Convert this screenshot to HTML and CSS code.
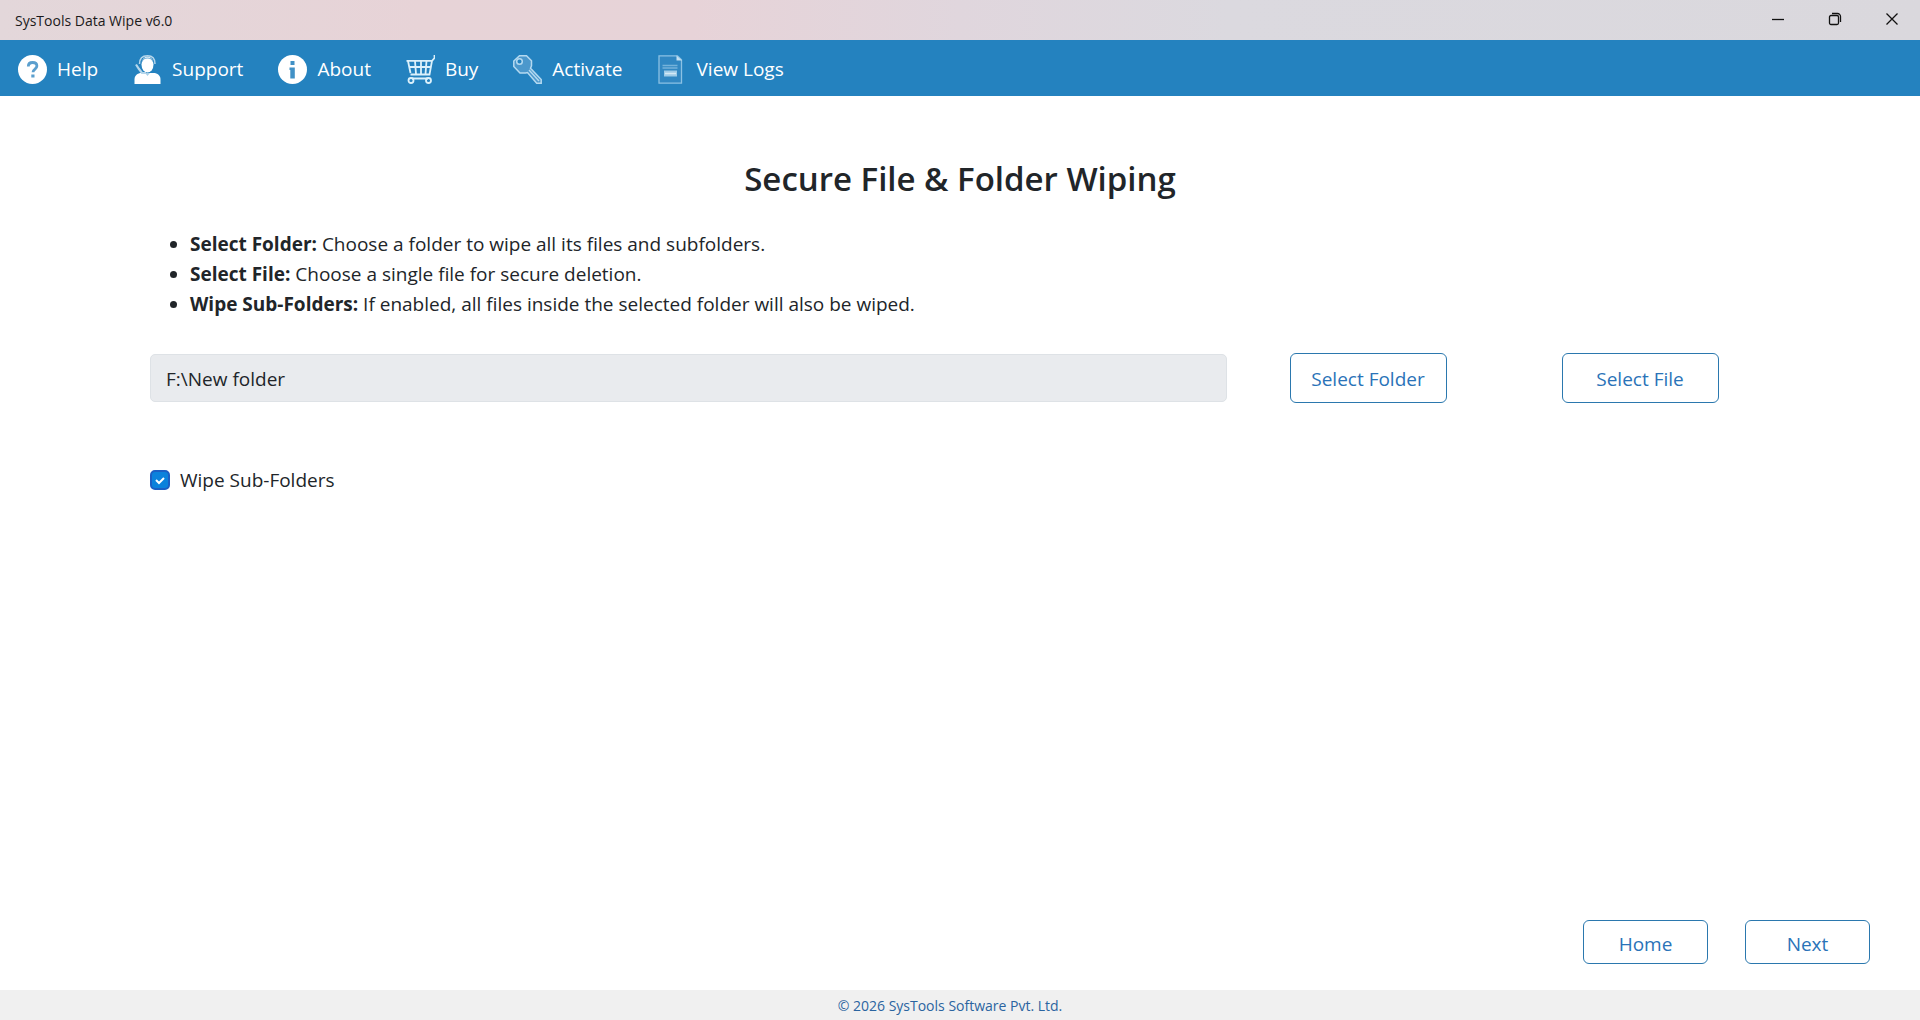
FILE: index.html
```html
<!DOCTYPE html>
<html lang="en">
<head>
  <meta charset="UTF-8">
  <meta name="viewport" content="width=device-width, initial-scale=1">
  <title>SysTools Data Wipe v6.0</title>
  <link rel="stylesheet" href="styles.css">
</head>
<body>
  <header class="title-bar">
    <span class="app-title">SysTools Data Wipe v6.0</span>
    <div class="window-controls">
      <button type="button" class="window-btn" aria-label="Minimize">
        <svg width="14" height="14" viewBox="0 0 14 14"><path d="M1 7.5h12"/></svg>
      </button>
      <button type="button" class="window-btn" aria-label="Restore">
        <svg width="14" height="14" viewBox="0 0 14 14"><rect x="1.5" y="3.5" width="9" height="9" rx="1.5"/><path d="M4 1.5h5.500a3 3 0 0 1 3 3V10"/></svg>
      </button>
      <button type="button" class="window-btn" aria-label="Close">
        <svg width="14" height="14" viewBox="0 0 14 14"><path d="M1.500 1.500l11 11M12.500 1.500l-11 11"/></svg>
      </button>
    </div>
  </header>

  <nav class="menu-bar">
    <a href="#help" class="menu-item">
      <svg class="menu-icon" viewBox="0 0 29 29">
        <circle cx="14.500" cy="14.500" r="14.500" fill="#fff"/>
        <path d="M10.300 11.500c0-2.600 1.800-4 4.300-4s4.300 1.400 4.300 3.600c0 3-3.900 2.900-3.900 6.200" fill="none" stroke="#5b9fce" stroke-width="2.800"/>
        <rect x="13.300" y="19.500" width="3.200" height="3" fill="#5b9fce"/>
      </svg>
      Help
    </a>
    <a href="#support" class="menu-item">
      <svg class="menu-icon" viewBox="0 0 29 29">
        <path d="M1.500 29v-4.500c0-4 3-6.500 7-6.500h12c4 0 7 2.500 7 6.500V29z" fill="#fff"/>
        <path d="M12 18l2.500 3 2.500-3z" fill="#a9d0e8"/>
        <ellipse cx="14.500" cy="9.500" rx="6" ry="8" fill="#fff"/>
        <path d="M6.500 9c0-6 3-8.200 8-8.200S22 3 22 9" fill="none" stroke="#b5d6eb" stroke-width="1.500"/>
        <path d="M9 6.500C10 3.500 12 3 14.500 3s4.500.5 5.500 3.500" fill="none" stroke="#6faed7" stroke-width="1.200"/>
        <path d="M3 9.500l3 4.500 3 4h4" fill="none" stroke="#b5d6eb" stroke-width="2.200"/>
      </svg>
      Support
    </a>
    <a href="#about" class="menu-item">
      <svg class="menu-icon" viewBox="0 0 29 29">
        <circle cx="14.500" cy="14.500" r="14.500" fill="#fff"/>
        <path d="M12.500 6h4v4h-4zM11.500 12.500h5.300V23.500h-4.500V15h-.8z" fill="#4191c6"/>
      </svg>
      About
    </a>
    <a href="#buy" class="menu-item">
      <svg class="menu-icon" viewBox="0 0 29 29" fill="none" stroke="#dcf1fb" stroke-width="1.800">
        <path d="M28.500 0v3L26 5.800 23.500 19.500H4.500M.5 5.800h25.500M2 6l2.500 12M3 12h22M9 6l1 13M15 6v13M20.500 6l-1 13M6 23.500h16"/>
        <circle cx="5" cy="25.500" r="2.500"/>
        <circle cx="22.500" cy="25.500" r="2.500"/>
      </svg>
      Buy
    </a>
    <a href="#activate" class="menu-item">
      <svg class="menu-icon" viewBox="0 0 29 29" fill="#4c98cc" stroke="#b4d9f0" stroke-width="1.500">
        <path d="M6.500.8h7l5 5v5l-1 2.500L28.200 24.500v3.700h-4.500L14.500 17.500l-2 .5H7L.8 11.500V6z"/>
        <path d="M16 15l10 11"/>
        <circle cx="6.500" cy="6.500" r="2.800" fill="#2482bf"/>
      </svg>
      Activate
    </a>
    <a href="#logs" class="menu-item">
      <svg class="menu-icon" viewBox="0 0 29 29">
        <path d="M1 .8h18.500l4 4v23.400H1z" fill="#3187c2" stroke="#8bc1e3" stroke-width="1.300"/>
        <path d="M18.500.5v5H24z" fill="#c4e0f2"/>
        <path d="M4.500 10.500h15M4.500 13h15" stroke="#75b2da" stroke-width="1.500"/>
        <path d="M6 15.500h13v6H6z" fill="#9fcbe7"/>
        <path d="M7 18.500h11" stroke="#d5e9f5" stroke-width="1.500"/>
      </svg>
      View Logs
    </a>
  </nav>

  <main class="content">
    <h1>Secure File &amp; Folder Wiping</h1>
    <ul class="instructions">
      <li><b>Select Folder:</b> Choose a folder to wipe all its files and subfolders.</li>
      <li><b>Select File:</b> Choose a single file for secure deletion.</li>
      <li><b>Wipe Sub-Folders:</b> If enabled, all files inside the selected folder will also be wiped.</li>
    </ul>

    <div class="path-row">
      <input type="text" class="path-input" value="F:\New folder" aria-label="Selected path" readonly>
      <div class="path-action"><button type="button" class="btn">Select Folder</button></div>
      <div class="path-action"><button type="button" class="btn">Select File</button></div>
    </div>

    <div class="option">
      <input type="checkbox" id="wipe-sub" checked>
      <label for="wipe-sub">Wipe Sub-Folders</label>
    </div>
  </main>

  <div class="page-actions">
    <button type="button" class="btn nav-btn">Home</button>
    <button type="button" class="btn nav-btn">Next</button>
  </div>

  <footer class="footer">© 2026 SysTools Software Pvt. Ltd.</footer>
</body>
</html>
```
FILE: styles.css
```css
* {
  box-sizing: border-box;
}
body {
  margin: 0;
  min-height: 100vh;
  display: flex;
  flex-direction: column;
  background: #fff;
  color: #212529;
  font-family: "Segoe UI", "Open Sans", "Noto Sans", sans-serif;
  font-size: 19px;
  line-height: 30px;
}
button, input {
  font: inherit;
}

/* Window title bar */
.title-bar {
  display: flex;
  justify-content: space-between;
  height: 40px;
  padding-left: 15px;
  background: linear-gradient(90deg, #e3d7da 0%, #e7d3d7 22%, #e7d3d8 36%, #e0d6dd 50%, #dbd9df 64%, #dad8dd 100%);
}
.app-title {
  color: #1b1a1b;
  font-size: 14px;
  line-height: 41px;
}
.window-controls {
  display: flex;
}
.window-btn {
  display: flex;
  align-items: center;
  justify-content: center;
  width: 57px;
  height: 38px;
  padding: 0;
  background: none;
  border: none;
}
.window-btn svg {
  fill: none;
  stroke: #111;
  stroke-width: 1.3;
}

/* Menu */
.menu-bar {
  display: flex;
  align-items: center;
  gap: 35px;
  height: 56px;
  padding: 2px 18px 0;
  background: #2482bf;
}
.menu-item {
  display: flex;
  align-items: center;
  gap: 10px;
  color: #fff;
  text-decoration: none;
}
.menu-icon {
  width: 29px;
  height: 29px;
}

/* Page content */
.content {
  flex: 1;
  width: 85%;
  margin: 0 auto;
  padding-top: 60px;
}
h1 {
  margin: 0 0 27px;
  font-size: 33px;
  font-weight: 600;
  line-height: 46px;
  text-align: center;
}
.instructions {
  margin: 0 0 34px;
  padding-left: 46px;
}
.path-row {
  display: grid;
  grid-template-columns: 4fr 1fr 1fr;
  align-items: center;
}
.path-input {
  height: 48px;
  margin: 0 5px 0 6px;
  padding: 2px 15px 0;
  background: #e9ebee;
  border: 1px solid #dee2e6;
  border-radius: 5px;
  color: #212529;
  outline: none;
}
.path-action {
  text-align: center;
}
.btn {
  width: 157px;
  height: 50px;
  padding: 2px 0 0;
  background: #fff;
  border: 1px solid #2b78ae;
  border-radius: 6px;
  color: #2a73b8;
  cursor: pointer;
}
.btn:hover {
  background: #2482bf;
  color: #fff;
}
.option {
  display: flex;
  align-items: center;
  gap: 10px;
  margin-top: 62px;
  padding-left: 6px;
}
.option input {
  appearance: none;
  width: 20px;
  height: 20px;
  margin: 0;
  border: 2px solid #1c5fc4;
  border-radius: 5px;
}
.option input:checked {
  background: #0b82dc url("data:image/svg+xml,%3Csvg xmlns='http://www.w3.org/2000/svg' viewBox='0 0 16 16'%3E%3Cpath d='M4 8l3 3 5-5' fill='none' stroke='%23fff' stroke-width='2'/%3E%3C/svg%3E") center / 16px no-repeat;
}

.page-actions {
  display: flex;
  justify-content: flex-end;
  gap: 37px;
  padding: 0 50px 26px;
}
.nav-btn {
  width: 125px;
  height: 44px;
  padding-top: 4px;
}

.footer {
  height: 30px;
  padding-right: 20px;
  background: #f0f0f0;
  color: #2b64a0;
  font-size: 14px;
  line-height: 31px;
  text-align: center;
}
```
